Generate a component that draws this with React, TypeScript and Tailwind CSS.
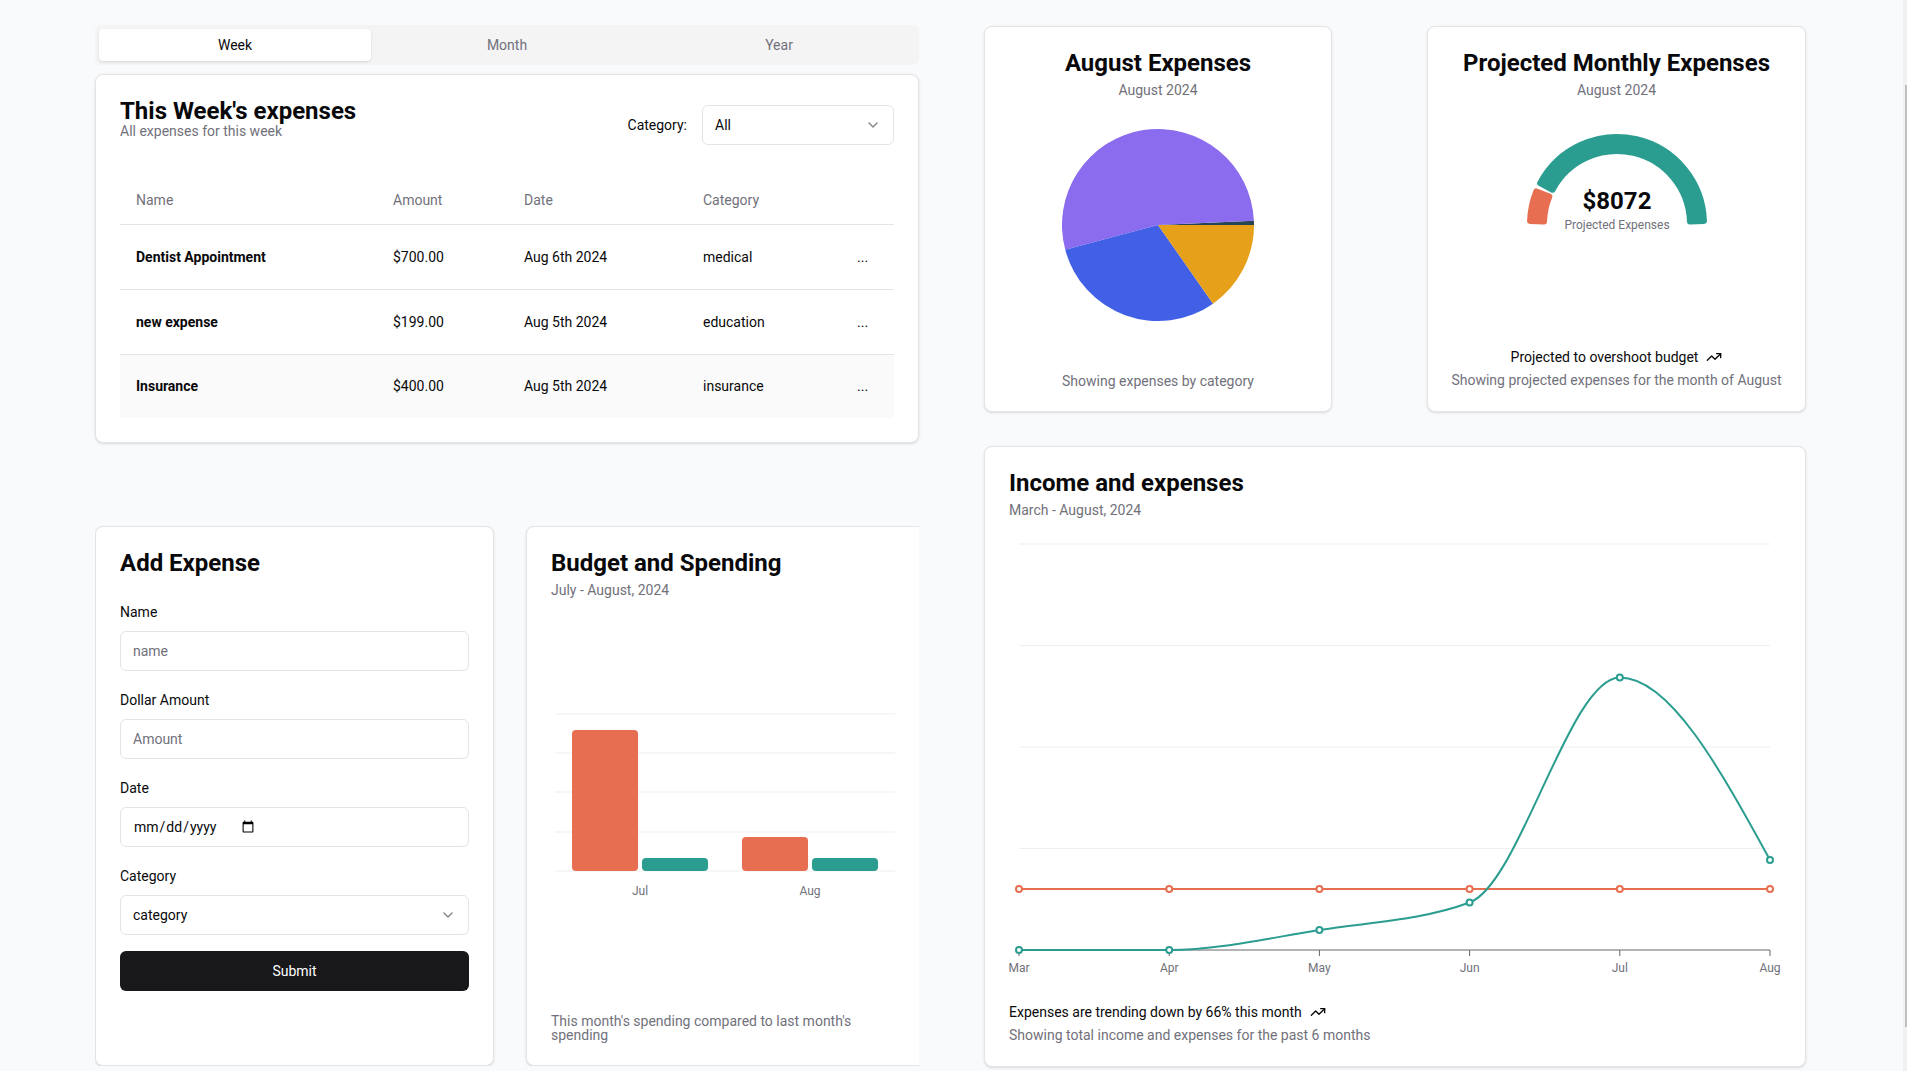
import { ChevronDown, TrendingUp } from "lucide-react";

const expenses = [
  { name: "Dentist Appointment", amount: "$700.00", date: "Aug 6th 2024", category: "medical" },
  { name: "new expense", amount: "$199.00", date: "Aug 5th 2024", category: "education" },
  { name: "Insurance", amount: "$400.00", date: "Aug 5th 2024", category: "insurance" },
];

// pie slices, degrees counter-clockwise from 3 o'clock
const slices = [
  { from: 0, to: 2.5, color: "#264653" },
  { from: 2.5, to: 195, color: "#8b6cef" },
  { from: 195, to: 305, color: "#4160e6" },
  { from: 305, to: 360, color: "#e6a01a" },
];

const months = ["Mar", "Apr", "May", "Jun", "Jul", "Aug"];
const expenseY = [430, 430, 410, 382.5, 157.5, 340];
const incomeY = 369;

function polar(cx: number, cy: number, r: number, deg: number) {
  const a = (deg * Math.PI) / 180;
  return [cx + r * Math.cos(a), cy - r * Math.sin(a)];
}

function slicePath(cx: number, cy: number, r: number, from: number, to: number) {
  const [x1, y1] = polar(cx, cy, r, from);
  const [x2, y2] = polar(cx, cy, r, to);
  const large = to - from > 180 ? 1 : 0;
  return `M${cx},${cy} L${x1},${y1} A${r},${r} 0 ${large} 0 ${x2},${y2} Z`;
}

function ringPath(cx: number, cy: number, ri: number, ro: number, from: number, to: number) {
  const [a, b] = polar(cx, cy, ro, from);
  const [c, d] = polar(cx, cy, ro, to);
  const [e, f] = polar(cx, cy, ri, to);
  const [g, h] = polar(cx, cy, ri, from);
  const large = to - from > 180 ? 1 : 0;
  return `M${a},${b} A${ro},${ro} 0 ${large} 0 ${c},${d} L${e},${f} A${ri},${ri} 0 ${large} 1 ${g},${h} Z`;
}

// same maths as d3 curveMonotoneX
function monotonePath(p: number[][]) {
  const n = p.length;
  const s: number[] = [];
  for (let i = 0; i < n - 1; i++) s.push((p[i + 1][1] - p[i][1]) / (p[i + 1][0] - p[i][0]));
  const sg = (v: number) => (v < 0 ? -1 : 1);
  const t: number[] = new Array(n).fill(0);
  for (let i = 1; i < n - 1; i++) {
    const h0 = p[i][0] - p[i - 1][0];
    const h1 = p[i + 1][0] - p[i][0];
    const q = (s[i - 1] * h1 + s[i] * h0) / (h0 + h1);
    t[i] = (sg(s[i - 1]) + sg(s[i])) * Math.min(Math.abs(s[i - 1]), Math.abs(s[i]), 0.5 * Math.abs(q)) || 0;
  }
  t[0] = (3 * s[0] - t[1]) / 2;
  t[n - 1] = (3 * s[n - 2] - t[n - 2]) / 2;
  let d = `M${p[0][0]},${p[0][1]}`;
  for (let i = 0; i < n - 1; i++) {
    const dx = (p[i + 1][0] - p[i][0]) / 3;
    d += ` C${p[i][0] + dx},${p[i][1] + dx * t[i]} ${p[i + 1][0] - dx},${p[i + 1][1] - dx * t[i + 1]} ${p[i + 1][0]},${p[i + 1][1]}`;
  }
  return d;
}

function Field({ label, children }: { label: string; children: React.ReactNode }) {
  return (
    <div className="flex flex-col">
      <label className="mb-3 text-sm leading-none">{label}</label>
      {children}
    </div>
  );
}

function ExpensesTable() {
  return (
    <div className="mt-[9px] rounded-lg border border-zinc-200 bg-white p-6 shadow-sm">
      <div className="flex items-start justify-between">
        <div>
          <h2 className="text-2xl font-bold leading-6">This Week's expenses</h2>
          <p className="text-sm leading-4 text-zinc-500">All expenses for this week</p>
        </div>
        <div className="mt-1.5 flex items-center gap-[15px] text-sm">
          <span>Category:</span>
          <button className="flex h-10 w-48 items-center justify-between rounded-md border border-zinc-200 bg-white px-3">
            <span>All</span>
            <ChevronDown className="h-4 w-4 opacity-50" />
          </button>
        </div>
      </div>
      <table className="mt-[31px] w-full table-fixed text-sm">
        <colgroup>
          <col className="w-[257px]" />
          <col className="w-[131px]" />
          <col className="w-[179px]" />
          <col className="w-[154px]" />
          <col />
        </colgroup>
        <thead>
          <tr className="h-12 border-b border-zinc-200 text-left text-zinc-500">
            <th className="px-4 font-normal">Name</th>
            <th className="px-4 font-normal">Amount</th>
            <th className="px-4 font-normal">Date</th>
            <th className="px-4 font-normal">Category</th>
            <th />
          </tr>
        </thead>
        <tbody>
          {expenses.map((e, i) => (
            <tr
              key={e.name}
              className={i === expenses.length - 1 ? "h-16 bg-zinc-50" : "h-[65px] border-b border-zinc-200"}
            >
              <td className="px-4 font-bold">{e.name}</td>
              <td className="px-4">{e.amount}</td>
              <td className="px-4">{e.date}</td>
              <td className="px-4">{e.category}</td>
              <td className="px-4">...</td>
            </tr>
          ))}
        </tbody>
      </table>
    </div>
  );
}

function AddExpense() {
  const input =
    "h-10 w-full rounded-md border border-zinc-200 bg-white px-3 text-sm placeholder:text-zinc-500 outline-none";
  return (
    <div className="h-full w-[399px] shrink-0 rounded-lg border border-zinc-200 bg-white p-6 shadow-sm">
      <h2 className="text-2xl font-bold leading-6">Add Expense</h2>
      <form className="mt-[30px] flex flex-col" onSubmit={(e) => e.preventDefault()}>
        <div className="flex flex-col gap-[22px]">
          <Field label="Name">
            <input className={input} placeholder="name" />
          </Field>
          <Field label="Dollar Amount">
            <input className={input} placeholder="Amount" />
          </Field>
          <Field label="Date">
            <input type="date" className={"flex " + input} />
          </Field>
          <Field label="Category">
            <button
              type="button"
              className="flex h-10 w-full items-center justify-between rounded-md border border-zinc-200 bg-white px-3 text-sm"
            >
              <span>category</span>
              <ChevronDown className="h-4 w-4 opacity-50" />
            </button>
          </Field>
        </div>
        <button type="submit" className="mt-4 h-10 w-full rounded-md bg-[#18181b] text-sm text-white">
          Submit
        </button>
      </form>
    </div>
  );
}

function BudgetCard() {
  const grid = [114, 153, 192, 232, 271];
  return (
    <div className="h-full w-[400px] shrink-0 rounded-lg border border-zinc-200 bg-white p-6 shadow-sm">
      <h2 className="text-2xl font-bold leading-6">Budget and Spending</h2>
      <p className="mt-[5px] text-sm leading-5 text-zinc-500">July - August, 2024</p>
      <svg width="350" height="414" className="block">
        {grid.map((y) => (
          <line key={y} x1="4" x2="344" y1={y} y2={y} stroke="#efefef" />
        ))}
        <rect x="21" y="130" width="66" height="141" rx="4" fill="#e76e50" />
        <rect x="91" y="258" width="66" height="13" rx="4" fill="#2a9d90" />
        <rect x="191" y="237" width="66" height="34" rx="4" fill="#e76e50" />
        <rect x="261" y="258" width="66" height="13" rx="4" fill="#2a9d90" />
        <text x="89" y="295" textAnchor="middle" fontSize="12" fill="#71717a">Jul</text>
        <text x="259" y="295" textAnchor="middle" fontSize="12" fill="#71717a">Aug</text>
      </svg>
      <p className="text-sm leading-[14px] text-zinc-500">This month's spending compared to last month's spending</p>
    </div>
  );
}

function AugustCard() {
  return (
    <div className="flex h-[386px] w-[348px] flex-col items-center overflow-hidden rounded-lg border border-zinc-200 bg-white px-6 pt-6 text-center shadow-sm">
      <h2 className="shrink-0 text-2xl font-bold leading-6">August Expenses</h2>
      <p className="mt-[5px] shrink-0 text-sm leading-5 text-zinc-500">August 2024</p>
      <svg width="200" height="200" className="mt-[25px] shrink-0">
        {slices.map((s) => (
          <path key={s.color} d={slicePath(100, 100, 96, s.from, s.to)} fill={s.color} />
        ))}
      </svg>
      <p className="mt-[46px] shrink-0 text-sm leading-5 text-zinc-500">Showing expenses by category</p>
    </div>
  );
}

function ProjectedCard() {
  return (
    <div className="flex h-[386px] w-[379px] flex-col items-center overflow-hidden rounded-lg border border-zinc-200 bg-white px-6 pt-6 text-center shadow-sm">
      <h2 className="shrink-0 whitespace-nowrap text-2xl font-bold leading-6">Projected Monthly Expenses</h2>
      <p className="mt-[5px] shrink-0 text-sm leading-5 text-zinc-500">August 2024</p>
      <svg width="200" height="115" className="mt-[24px] shrink-0">
        <path
          d={ringPath(100, 100, 73, 87, 2, 152)}
          fill="#2a9d90"
          stroke="#2a9d90"
          strokeWidth="6"
          strokeLinejoin="round"
        />
        <path
          d={ringPath(100, 100, 73, 87, 158, 178)}
          fill="#e76e50"
          stroke="#e76e50"
          strokeWidth="6"
          strokeLinejoin="round"
        />
        <text x="100" y="85" textAnchor="middle" fontSize="24" fontWeight="700" fill="#09090b">
          $8072
        </text>
        <text x="100" y="105" textAnchor="middle" fontSize="12" fill="#71717a">
          Projected Expenses
        </text>
      </svg>
      <div className="mt-[108px] flex shrink-0 items-center gap-2 whitespace-nowrap text-sm leading-5">
        Projected to overshoot budget <TrendingUp className="h-4 w-4" />
      </div>
      <p className="mt-[3px] shrink-0 whitespace-nowrap text-sm leading-5 text-zinc-500">
        Showing projected expenses for the month of August
      </p>
    </div>
  );
}

function IncomeCard() {
  const xs = months.map((_, i) => 10 + 150.2 * i);
  const expensePts = xs.map((x, i) => [x, expenseY[i]]);
  const grid = [24, 125.5, 227, 328.5];
  return (
    <div className="mt-[34px] h-[621px] rounded-lg border border-zinc-200 bg-white p-6 shadow-sm">
      <h2 className="text-2xl font-bold leading-6">Income and expenses</h2>
      <p className="mt-[5px] text-sm leading-5 text-zinc-500">March - August, 2024</p>
      <svg width="772" height="460" className="block">
        {grid.map((y) => (
          <line key={y} x1={xs[0]} x2={xs[5]} y1={y} y2={y} stroke="#efefef" />
        ))}
        <line x1={xs[0]} x2={xs[5]} y1="430" y2="430" stroke="#666" />
        {xs.map((x, i) => (
          <g key={months[i]}>
            <line x1={x} x2={x} y1="430" y2="436" stroke="#666" />
            <text x={x} y="452" textAnchor="middle" fontSize="12" fill="#71717a">
              {months[i]}
            </text>
          </g>
        ))}
        <line x1={xs[0]} x2={xs[5]} y1={incomeY} y2={incomeY} stroke="#e76e50" strokeWidth="2" />
        <path d={monotonePath(expensePts)} fill="none" stroke="#2a9d90" strokeWidth="2" />
        {xs.map((x) => (
          <circle key={"i" + x} cx={x} cy={incomeY} r="3" fill="#fff" stroke="#e76e50" strokeWidth="2" />
        ))}
        {expensePts.map(([x, y]) => (
          <circle key={"e" + x} cx={x} cy={y} r="3" fill="#fff" stroke="#2a9d90" strokeWidth="2" />
        ))}
      </svg>
      <div className="mt-[22px] flex items-center gap-2 text-sm leading-5">
        Expenses are trending down by 66% this month <TrendingUp className="h-4 w-4" />
      </div>
      <p className="mt-[3px] text-sm leading-5 text-zinc-500">Showing total income and expenses for the past 6 months</p>
    </div>
  );
}

export default function App() {
  return (
    <div className="relative h-[1071px] overflow-hidden bg-gray-50 font-['Roboto','Liberation_Sans',sans-serif] text-zinc-950">
      <div className="flex gap-[65px] pl-[95px] pt-[25px]">
        <div className="flex w-[824px] shrink-0 flex-col">
          <div className="grid h-10 grid-cols-3 rounded-md bg-zinc-100 p-1 text-sm">
            <button className="rounded-sm bg-white text-zinc-950 shadow-sm">Week</button>
            <button className="text-zinc-500">Month</button>
            <button className="text-zinc-500">Year</button>
          </div>
          <ExpensesTable />
          <div className="mt-[83px] flex h-[540px] gap-8 overflow-hidden">
            <AddExpense />
            <BudgetCard />
          </div>
        </div>
        <div className="flex w-[822px] shrink-0 flex-col pt-px">
          <div className="flex justify-between">
            <AugustCard />
            <ProjectedCard />
          </div>
          <IncomeCard />
        </div>
      </div>
      <div className="absolute right-0 top-0 h-full w-1 bg-[#f1f1f1]">
        <div className="absolute right-0 top-[85px] h-[942px] w-[2px] bg-[#c1c1c1]" />
      </div>
    </div>
  );
}
